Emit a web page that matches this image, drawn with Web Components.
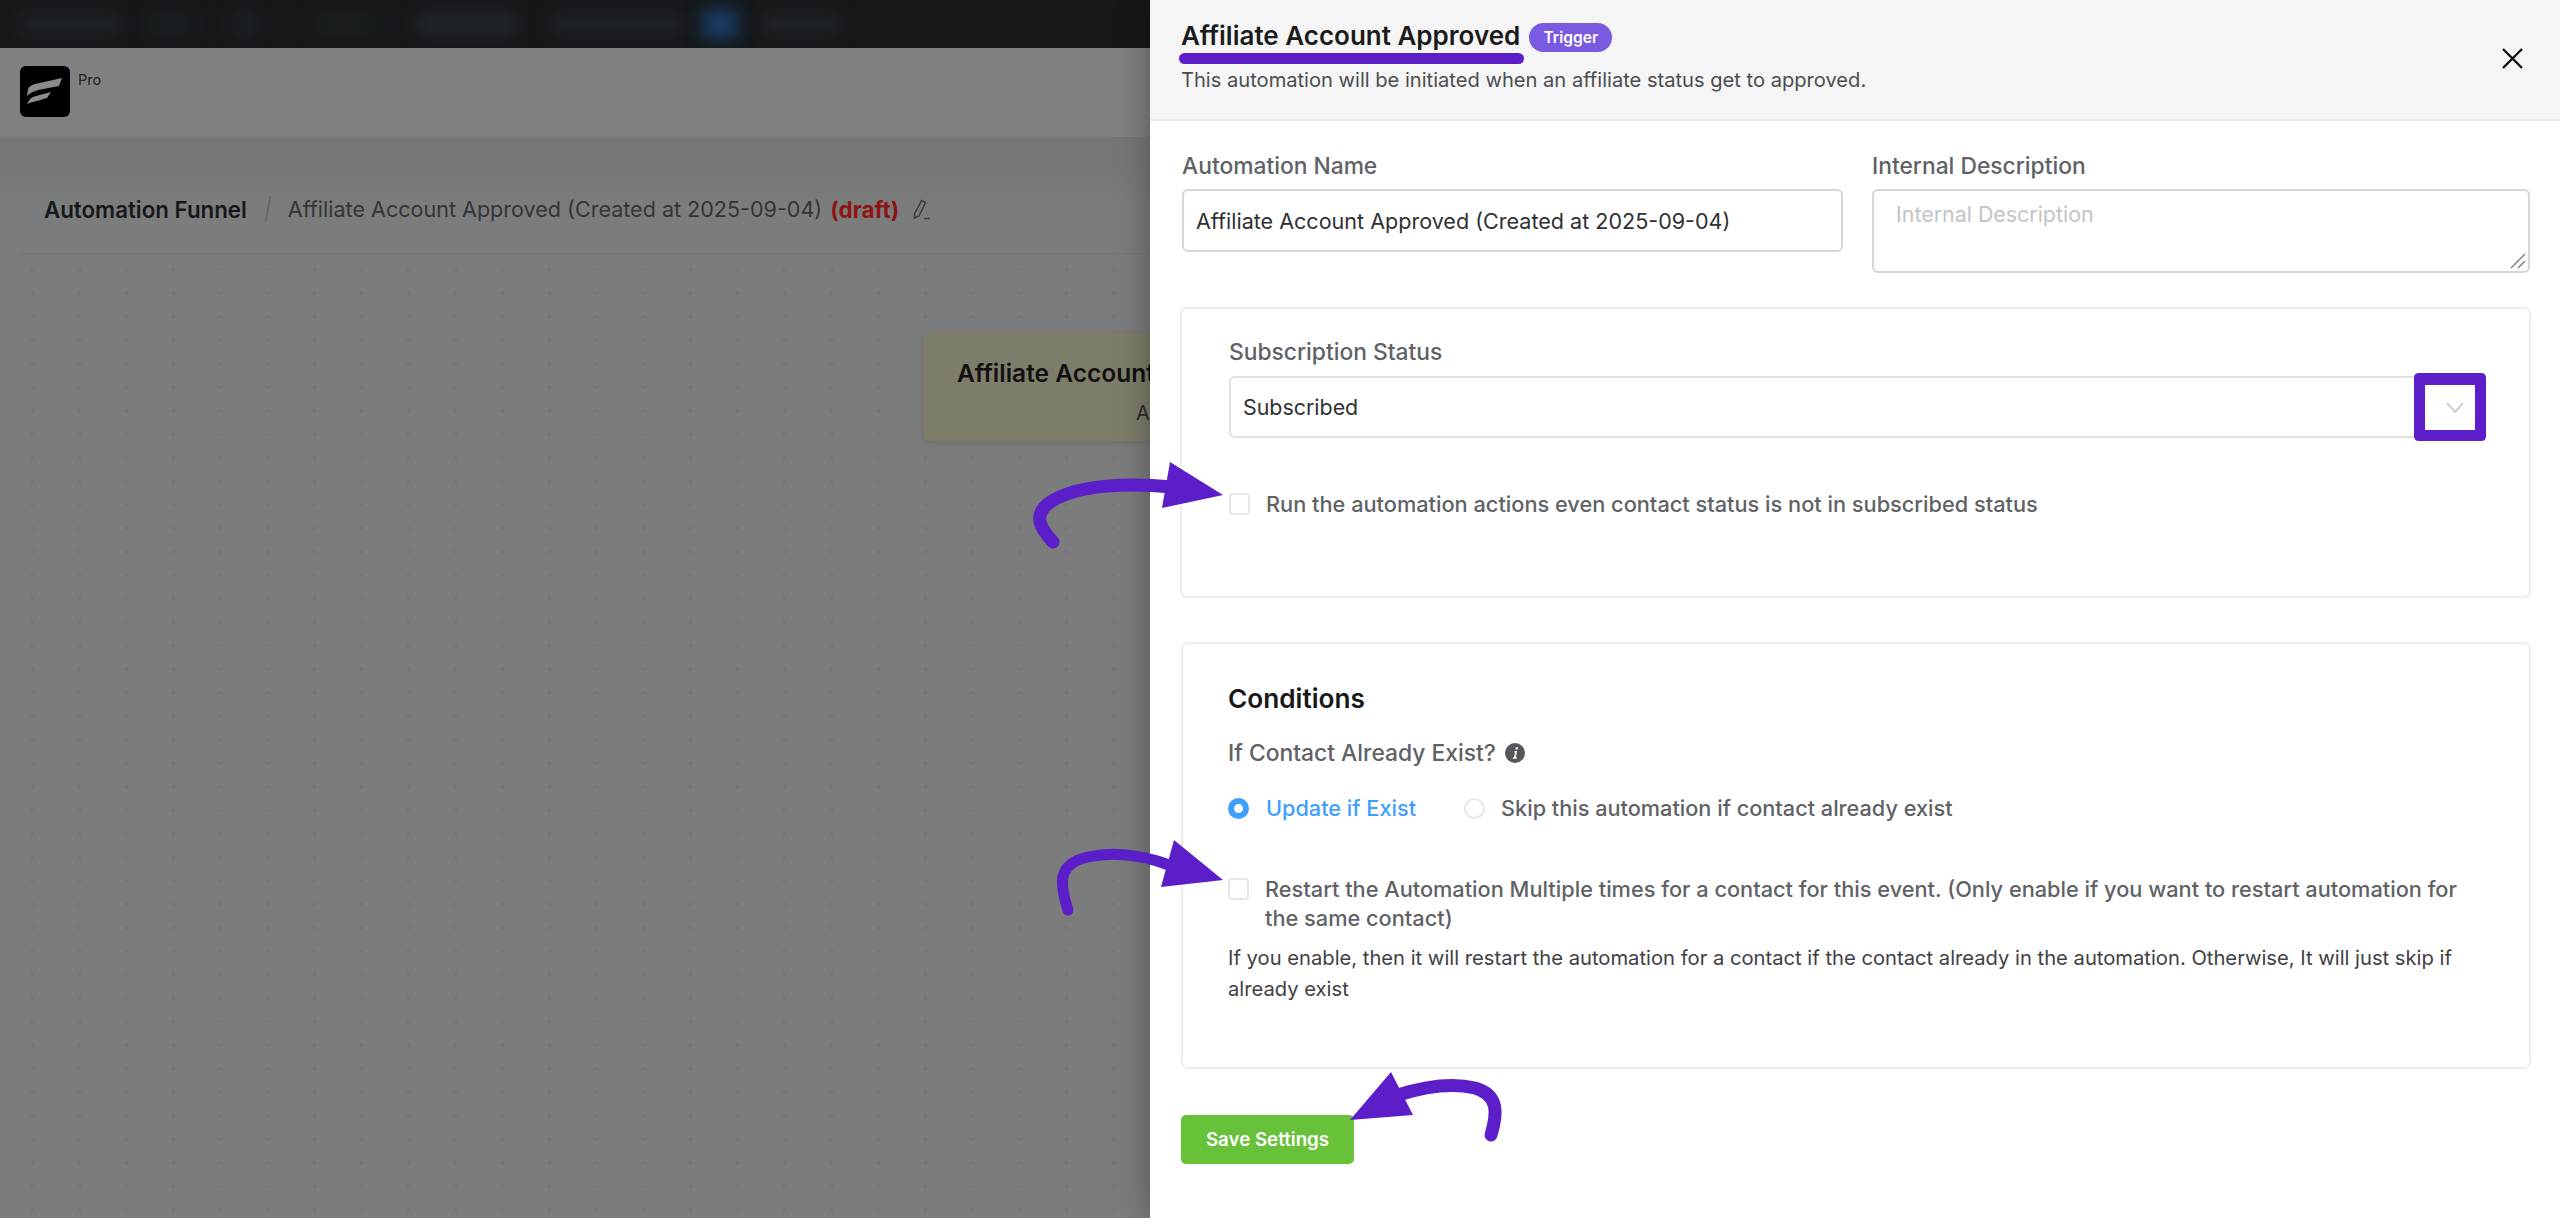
<!DOCTYPE html>
<html lang="en"><head><meta charset="utf-8"><title>Affiliate Account Approved</title>
<style>html,body{margin:0;background:#fff}body{font-family:Inter,"Liberation Sans",sans-serif}</style></head><body>
<fc-app>
  <fc-page slot="page"></fc-page>
  <fc-panel slot="panel">
    <fc-panel-head slot="head"></fc-panel-head>
    <fc-field-row>
      <fc-field label="Automation Name" value="Affiliate Account Approved (Created at 2025-09-04)" kind="name"></fc-field>
      <fc-field label="Internal Description" placeholder="Internal Description" kind="area"></fc-field>
    </fc-field-row>
    <fc-card kind="status">
      <fc-select label="Subscription Status" value="Subscribed"></fc-select>
      <fc-check class="c1">Run the automation actions even contact status is not in subscribed status</fc-check>
    </fc-card>
    <fc-card kind="conditions">
      <fc-conditions></fc-conditions>
    </fc-card>
    <fc-button>Save Settings</fc-button>
  </fc-panel>
  <fc-annotations slot="over"></fc-annotations>
</fc-app>
<script>
function def(name, css, html){
  customElements.define(name, class extends HTMLElement{
    constructor(){super();const r=this.attachShadow({mode:'open'});
      const get=a=>this.getAttribute(a)||'';
      r.innerHTML='<style>'+css+'</style>'+(typeof html==='function'?html(get):html);}
  });
}
def('fc-app',`:host{display:grid;grid-template-columns:1150px 1410px;width:2560px;height:1218px;overflow:hidden;position:relative}
`,`<slot name="page"></slot><slot name="panel"></slot><slot name="over"></slot>`);

def('fc-page',`:host{display:flex;flex-direction:column;height:1218px;background:#757777;overflow:hidden;color:#1b1c1d}
.top{height:48px;background:#15181b;display:flex;align-items:center;overflow:hidden;flex:none}
.top i{display:block;height:24px;background:#1e2225;filter:blur(8px);flex:none}
.brand{height:89px;background:#808080;flex:none;display:flex;align-items:flex-start;padding:18px 0 0 20px;box-sizing:border-box;gap:8px}
.brand svg{display:block;flex:none}
.brand span{font-size:14.5px;color:#222;line-height:26px;margin-top:1px}
.board{flex:1;margin:28px 0 0 0;padding-left:20px;background:linear-gradient(#757777,#7b7d7d 40px);display:flex;flex-direction:column;min-height:0}
.crumb{height:88px;flex:none;border-bottom:2px solid #767878;display:flex;align-items:center;padding:0 0 0 24px;font-size:21.55px;color:#333536;white-space:nowrap}
.crumb b{font-weight:600;font-size:22.3px;color:#17181a}
.crumb s{display:block;text-decoration:none;width:2px;height:26px;background:#686a6a;transform:rotate(10deg);margin:0 19px 0 20px}
.crumb em{font-style:normal;font-weight:700;color:#8e1414;font-size:22.4px;margin-left:8px}
.crumb svg{margin-left:12px;display:block}
.canvas{flex:1;min-height:0;background-color:#7b7d7d;background-image:radial-gradient(circle,#747676 0,#747676 1.2px,transparent 2.4px);background-size:47px 23.5px;background-position:-11px 3px;padding:78px 0 0 904px;overflow:hidden}
.node{width:420px;height:108px;background:#7e7d6a;border-radius:6px;box-shadow:0 2px 6px rgba(0,0,0,.12);box-sizing:border-box;padding:23px 0 0 33px;white-space:nowrap}
.node b{display:block;font-weight:600;font-size:24.5px;line-height:34px;color:#111}
.node span{display:block;font-size:20px;line-height:30px;color:#2a2a2a;margin:8px 0 0 179px}
`,`<div class="top">
<i style="width:100px;margin-left:20px"></i><i style="width:40px;margin-left:30px;background:#1a1f22"></i><i style="width:22px;margin-left:45px"></i><i style="width:60px;margin-left:55px;background:#1a1e20"></i><i style="width:100px;margin-left:45px;background:#222629"></i><i style="width:130px;margin-left:35px"></i><i style="width:36px;margin-left:20px;background:#1a3a60;height:30px"></i><i style="width:78px;margin-left:24px"></i>
</div>
<div class="brand"><svg width="50" height="51" viewBox="0 0 50 51"><rect width="50" height="51" rx="6" fill="#000"/><path d="M8 23 Q9 20 15 18 L42 12 L39 20 L18 24 Q11 26 7 30 Z" fill="#8b8b8b"/><path d="M7 38 L10 33 Q12 31 16 30 L31 26 L27 32 L17 35 Q11 36 7 38 Z" fill="#8b8b8b"/></svg><span>Pro</span></div>
<div class="board">
  <div class="crumb"><b>Automation Funnel</b><s></s><span>Affiliate Account Approved (Created at 2025-09-04)</span><em>(draft)</em>
  <svg width="20" height="22" viewBox="0 0 20 22" fill="none" stroke="#3a3c3d" stroke-width="1.5"><path d="M3.5 16 L10.5 2.5 L14.5 4.5 L8 18 L3.5 20 Z"/><path d="M13 20.5 H19" /></svg></div>
  <div class="canvas"><div class="node"><b>Affiliate Account</b><span>A</span></div></div>
</div>`);

def('fc-panel',`:host{display:block;height:1218px;background:#fff;box-shadow:0 0 30px rgba(0,0,0,.35);position:relative;box-sizing:border-box;padding:0 29px 0 30px}
`,`<slot name="head"></slot><slot></slot>`);

def('fc-panel-head',`:host{display:flex;justify-content:space-between;height:121px;margin:0 -29px 0 -30px;box-sizing:border-box;background:#f5f5f5;border-bottom:2px solid #e9e9e9;padding:0 37px 0 31px}
.t{display:flex;align-items:center;height:46px;padding-top:13px}
h1{margin:0;font-size:26px;font-weight:600;color:#1b1b1c;line-height:46px;white-space:nowrap;letter-spacing:0}
.b{margin-left:9px;height:29px;width:83px;border-radius:15px;background:#7a5ae0;color:#fff;font-size:15.6px;font-weight:600;display:flex;align-items:center;justify-content:center;margin-top:3px}
p{margin:5px 0 0;font-size:20.13px;line-height:32px;color:#4b4d50;white-space:nowrap}
svg{display:block;margin-top:48px}
`,`<div><div class="t"><h1>Affiliate Account Approved</h1><span class="b">Trigger</span></div><p>This automation will be initiated when an affiliate status get to approved.</p></div>
<svg width="21" height="21" viewBox="0 0 21 21" stroke="#111" stroke-width="2.4" fill="none"><path d="M1 1 L20 20 M20 1 L1 20"/></svg>`);

def('fc-field-row',`:host{display:grid;grid-template-columns:661px 658px;column-gap:29px;padding:32px 0 0 2px;height:120px;margin-bottom:34px}`,`<slot></slot>`);

def('fc-field',`:host{display:block}
label{display:block;font-size:22.8px;font-weight:500;line-height:26px;color:#606266;margin-bottom:10px;white-space:nowrap}
.box{box-sizing:border-box;border:2px solid #d4d6da;border-radius:6px;background:#fff;position:relative}
.name{height:63px;font-size:21.55px;font-weight:400;color:#303133;padding:0 0 0 12px;display:flex;align-items:center;white-space:nowrap}
.area{height:84px;font-size:21.4px;color:#c0c4cc;padding:8px 0 0 22px;line-height:30px}
.box svg{position:absolute;right:2px;bottom:2px;display:block}
`,(g)=>`<label>${g('label')}</label>`+(g('kind')==='name'?`<div class="box name">${g('value')}</div>`:`<div class="box area">${g('placeholder')}<svg width="16" height="16" viewBox="0 0 16 16" stroke="#777" stroke-width="1.3" fill="none"><path d="M1 15 L15 1 M8 15 L15 8"/></svg></div>`));

def('fc-card',`:host{display:block;box-sizing:border-box;border:2px solid #ececec;border-radius:7px;background:#fff;margin-bottom:44px;width:1351px;padding:30px 46px 0 47px}
:host([kind=status]){height:291px}
:host([kind=conditions]){height:427px;padding-top:39px;margin-left:1px;width:1350px;padding-left:45px;margin-bottom:46px}
`,`<slot></slot>`);

def('fc-select',`:host{display:block}
label{display:block;font-size:22.8px;font-weight:500;line-height:26px;color:#606266;margin-bottom:11px}
.s{box-sizing:border-box;height:62px;width:1257px;border:2px solid #dfe1e5;border-radius:6px;padding:0 12px;display:flex;align-items:center;justify-content:space-between;font-size:21.4px;font-weight:400;color:#303133}
svg{display:block;margin-right:8px}
`,(g)=>`<label>${g('label')}</label><div class="s"><span>${g('value')}</span><svg width="18" height="11" viewBox="0 0 18 11" fill="none" stroke="#bdc0c6" stroke-width="1.5"><path d="M1 1 L9 10 L17 1"/></svg></div>`);

def('fc-check',`:host{display:flex;align-items:flex-start;gap:16px;font-size:21.75px;font-weight:500;line-height:29.3px;color:#606266;margin-top:52px}
i{display:block;flex:none;box-sizing:border-box;width:21px;height:22px;border:2px solid #e4e6ea;border-radius:4px;background:#fff;margin-top:3px}
`,`<i></i><span><slot></slot></span>`);

def('fc-conditions',`:host{display:block;color:#606266}
h3{margin:0;font-size:26.2px;font-weight:600;line-height:32px;color:#17181a}
.q{display:flex;align-items:center;margin-top:24px;font-size:22.84px;font-weight:500;line-height:28px;white-space:nowrap}
.q svg{margin-left:9px;display:block}
.r{display:flex;align-items:center;margin-top:26px;font-size:21.7px;font-weight:500;line-height:30px;white-space:nowrap}
.r i{display:block;box-sizing:border-box;width:21px;height:21px;border-radius:50%;margin-right:17px;flex:none}
.on{background:#fff;border:6px solid #409eff}
.off{border:2px solid #e4e6ea;margin-left:48px;margin-right:16px !important}
.on+span{color:#409eff}
p{margin:8px 0 0;font-size:20.19px;line-height:31px;color:#3f4144}
`,`<h3>Conditions</h3>
<div class="q">If Contact Already Exist?<svg width="20" height="20" viewBox="0 0 20 20"><circle cx="10" cy="10" r="10" fill="#55575b"/><path d="M10.8 4.2 h2.2 l-.4 2.2 h-2.2 Z M9.5 8 h2.6 L10.8 14.2 h1.2 l-.3 1.6 H7.8 l.3 -1.6 h1 L10 9.6 H9.2 Z" fill="#fff"/></svg></div>
<div class="r"><i class="on"></i><span>Update if Exist</span><i class="off"></i><span>Skip this automation if contact already exist</span></div>
<fc-check>Restart the Automation Multiple times for a contact for this event. (Only enable if you want to restart automation for the same contact)</fc-check>
<p>If you enable, then it will restart the automation for a contact if the contact already in the automation. Otherwise, It will just skip if already exist</p>`);

def('fc-button',`:host{display:flex;align-items:center;justify-content:center;box-sizing:border-box;width:173px;height:49px;margin:2px 0 0 1px;border-radius:5px;background:#67c23a;color:#fff;font-size:18.7px;font-weight:600}
`,`<slot></slot>`);

def('fc-annotations',`:host{position:absolute;inset:0;pointer-events:none;display:block}
svg{position:absolute;left:0;top:0;display:block}
`,`<svg width="2560" height="1218" viewBox="0 0 2560 1218">
<g fill="#5b1ec8" stroke="none">
<rect x="1179" y="53" width="345" height="11" rx="5.5"/>
<path fill-rule="evenodd" d="M2419 373 H2481 Q2486 373 2486 378 V436 Q2486 441 2481 441 H2419 Q2414 441 2414 436 V378 Q2414 373 2419 373 Z M2425 385 V430 H2475 V385 Z"/>
<polygon points="1170,462 1223,495 1162,508"/>
<polygon points="1174,840 1223,880 1161,887"/>
<polygon points="1391,1072 1350,1120 1413,1115"/>
</g>
<g fill="none" stroke="#5b1ec8" stroke-width="13" stroke-linecap="round">
<path d="M1053 542 C1042 530 1030 515 1052 501 C1080 484 1130 483 1172 487"/>
<path d="M1068 910 C1060 885 1056 864 1088 857 C1115 851 1145 856 1172 866" stroke-width="11"/>
<path d="M1491 1135 C1497 1115 1500 1095 1475 1088 C1450 1082 1420 1088 1398 1095" stroke-width="13"/>
</g></svg>`);
</script></body></html>
